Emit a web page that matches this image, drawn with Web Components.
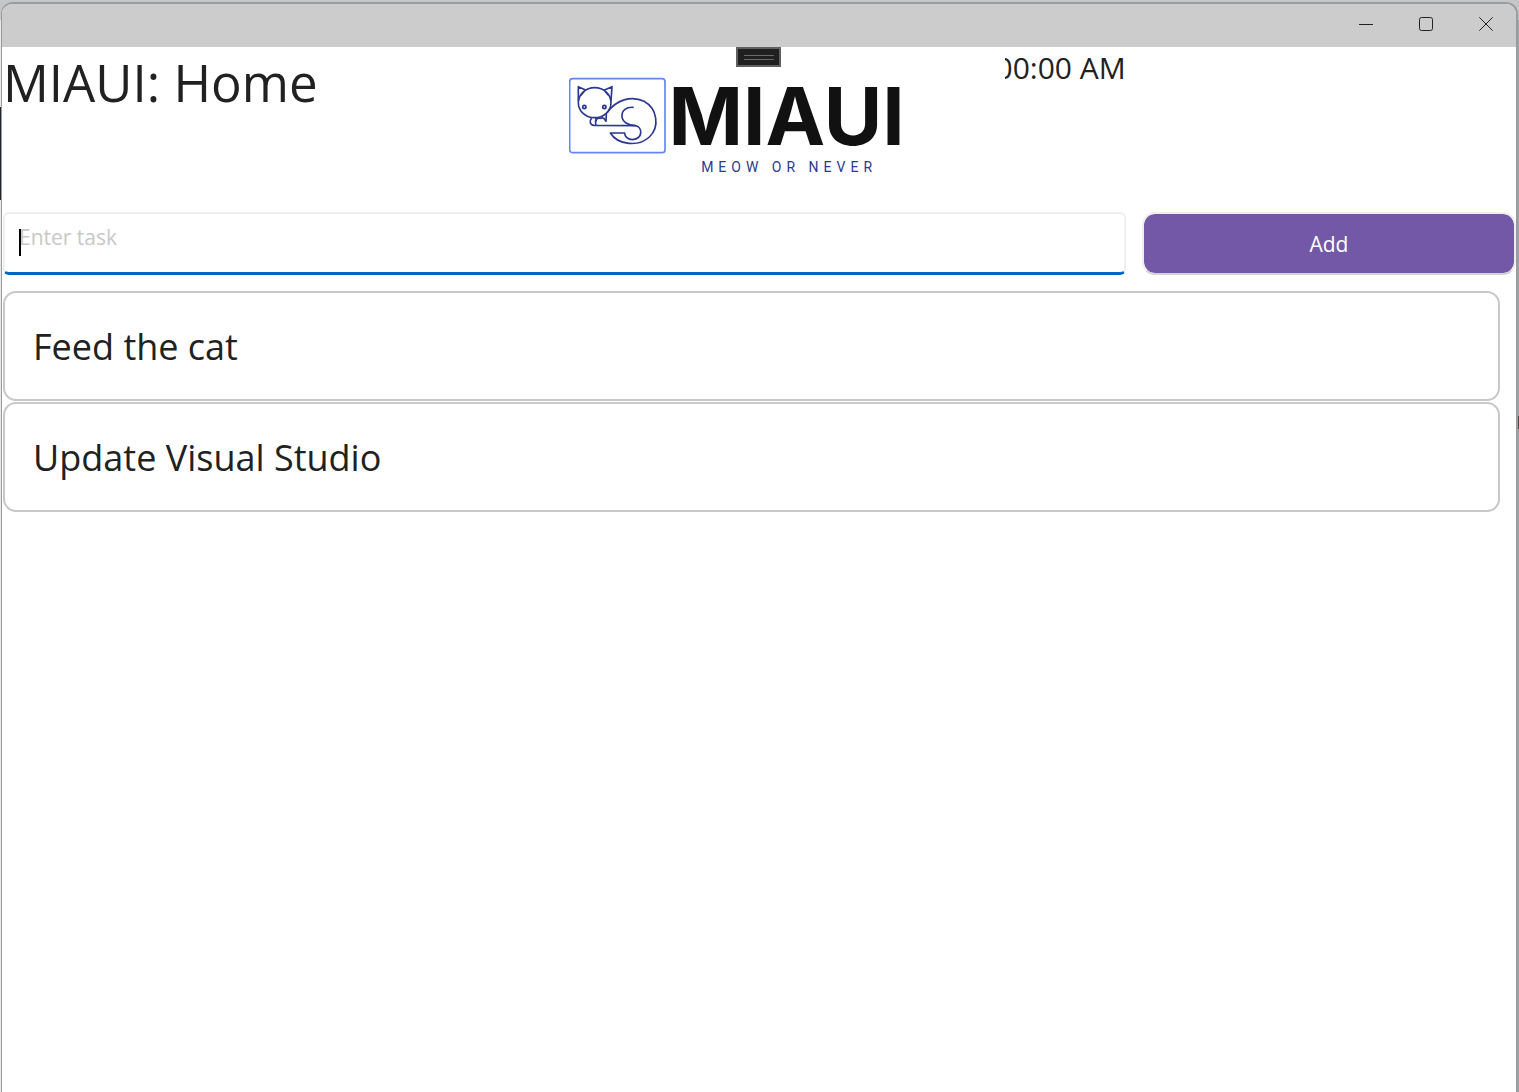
<!DOCTYPE html>
<html lang="en">
<head>
<meta charset="utf-8">
<title>MIAUI</title>
<style>
html, body { height: 100%; }
body {
  margin: 0;
  overflow: hidden;
  font-family: "Open Sans", sans-serif;
  color: #212121;
  background:
    linear-gradient(#c4c6c8, #c4c6c8) top / 100% 20px no-repeat,
    linear-gradient(#22252f, #22252f) 0 107px / 1px 93px no-repeat,
    linear-gradient(#5a4a42, #5a4a42) 100% 416px / 1px 13px no-repeat,
    linear-gradient(90deg, #e6e8ea 50%, #a4a4a4 50%);
}
</style>
</head>
<body>
<app-window>
  <title-bar slot="bar"></title-bar>
  <debug-handle slot="handle"></debug-handle>
  <page-header heading="MIAUI: Home" time="00:00 AM"><miaui-logo></miaui-logo></page-header>
  <task-form></task-form>
  <task-list>
    <task-card>Feed the cat</task-card>
    <task-card>Update Visual Studio</task-card>
  </task-list>
</app-window>
<script>
const define = (name, html, setup) => customElements.define(name, class extends HTMLElement {
  constructor() {
    super();
    this.attachShadow({ mode: "open" }).innerHTML = html;
  }
  connectedCallback() { if (setup) setup(this, this.shadowRoot); }
});

define("app-window", `
<style>
:host { display: block; box-sizing: border-box; height: 100%; padding: 2px 1px 0; }
.frame {
  box-sizing: border-box; height: 100%; position: relative; overflow: hidden;
  display: flex; flex-direction: column; background: #fff;
  border: solid #999c9e; border-width: 2px 2px 0 1px; border-radius: 12px 12px 0 0;
}
main { flex: 1; display: flex; flex-direction: column; padding: 0 0 0 1px; }
.handle { position: absolute; top: 43px; left: 0; right: 1px; display: flex; justify-content: center; z-index: 2; }
</style>
<div class="frame">
  <slot name="bar"></slot>
  <main><slot></slot></main>
  <div class="handle"><slot name="handle"></slot></div>
</div>`);

define("title-bar", `
<style>
:host { display: flex; justify-content: flex-end; height: 43px; background: #ccc; flex: none; }
button { width: 60px; height: 40px; padding: 0; border: 0; background: none; display: grid; place-items: center; }
svg { display: block; fill: none; stroke: #222; stroke-width: 1; }
</style>
<button aria-label="Minimize"><svg width="14" height="14"><path d="M0 7.5H14"/></svg></button>
<button aria-label="Maximize"><svg width="14" height="14"><rect x=".5" y=".5" width="13" height="13" rx="2"/></svg></button>
<button aria-label="Close"><svg width="14" height="14"><path d="M.3.3 13.7 13.7M13.7.3.3 13.7"/></svg></button>`);

define("debug-handle", `
<style>
:host { display: block; box-sizing: border-box; width: 45px; height: 20px; background: #202020; border: 2px solid #606060; }
div { width: 30px; height: 1px; margin: 6px auto 0; border: solid #6a6a6a; border-width: 1px 0; padding: 1px 0; box-sizing: content-box; }
</style>
<div></div>`);

define("page-header", `
<style>
:host { display: grid; grid-template-columns: 3fr 1fr; column-gap: 16px; height: 165px; }
.text { grid-area: 1 / 1; display: flex; justify-content: space-between; align-items: flex-start; }
h1 { margin: 0; font-size: 51px; font-weight: 400; line-height: 70px; }
time { font-size: 30px; line-height: 42px; }
.over { grid-area: 1 / 1 / 2 / 3; justify-self: center; }
</style>
<div class="text"><h1></h1><time></time></div>
<div class="over"><slot></slot></div>`, (host, root) => {
  root.querySelector("h1").textContent = host.getAttribute("heading");
  root.querySelector("time").textContent = host.getAttribute("time");
});

define("miaui-logo", `
<style>
:host { display: flex; box-sizing: border-box; width: 490px; height: 150px; padding: 30px 0 0 54px; gap: 2px; background: #fff; }
svg { flex: none; display: block; fill: none; stroke: #2b3990; stroke-width: 5; stroke-linejoin: round; }
.words { display: flex; flex-direction: column; align-items: center; }
.name { font: 700 80px/78px Inter, sans-serif; color: #111; }
.tag { margin: 2px 0 0 5px; font: 400 14px/20px Roboto, sans-serif; letter-spacing: 5px; color: #2b3990; }
</style>
<svg width="98" height="78" viewBox="29 21 294 234" aria-hidden="true">
  <rect x="31" y="26" width="286" height="222" rx="9" stroke="#6385f5"/>
  <ellipse cx="106" cy="98" rx="49" ry="45"/>
  <path d="M57 92V50L80 61M155 92 158 50 134 61M64 76 74 65M148 76 138 65"/>
  <circle cx="75" cy="111" r="5"/><circle cx="135" cy="111" r="5"/>
  <path d="M97 144C89 153 92 165 104 166L228 167C250 171 252 205 220 209 205 209 196 200 196 189H153C176 226 238 231 270 201 302 170 294 116 254 94 216 75 170 90 143 128"/>
  <path d="M108 144C112 148 111 152 109 156 108 160 108 163 111 166M125 145C112 142 106 153 109 159M132 143 140 154 141 130M125 145 132 143"/>
  <path d="M223 112C201 110 187 122 188 138 188 156 207 166 228 167"/>
</svg>
<div class="words"><span class="name">MIAUI</span><span class="tag">MEOW OR NEVER</span></div>`);

define("task-form", `
<style>
:host { display: block; }
form { display: grid; grid-template-columns: 3fr 1fr; column-gap: 16px; }
.field { position: relative; display: flex; }
.field::after { content: ""; position: absolute; left: 16px; top: 17px; width: 2px; height: 27px; background: #000; }
input {
  flex: 1; min-width: 0; box-sizing: border-box; height: 63px; padding: 0 14px 12px 14px;
  border: 2px solid #efefef; border-bottom: 3px solid #0067c0; border-radius: 6px;
  font: 21px/28px "Open Sans", sans-serif; color: #212121; background: #fff; outline: 0; caret-color: transparent;
}
input::placeholder { color: #c8c8c8; opacity: 1; }
button {
  height: 63px; border: 2px solid #eee; border-bottom-color: #d4d4d8; border-radius: 13px; padding: 0;
  background: #7358a8; background-clip: padding-box; color: #fff; font: 21px/28px "Open Sans", sans-serif;
}
</style>
<form onsubmit="return false">
  <div class="field"><input type="text" placeholder="Enter task" aria-label="Enter task"></div>
  <button type="submit">Add</button>
</form>`);

define("task-list", `
<style>
:host { display: flex; flex-direction: column; gap: 1px; padding: 16px 16px 0 0; }
</style>
<slot></slot>`);

define("task-card", `
<style>
:host { display: block; padding: 28px 28px 26px; border: 2px solid #c8c8c8; border-radius: 13px; font-size: 36px; line-height: 52px; background: #fff; }
</style>
<slot></slot>`);
</script>
</body>
</html>
